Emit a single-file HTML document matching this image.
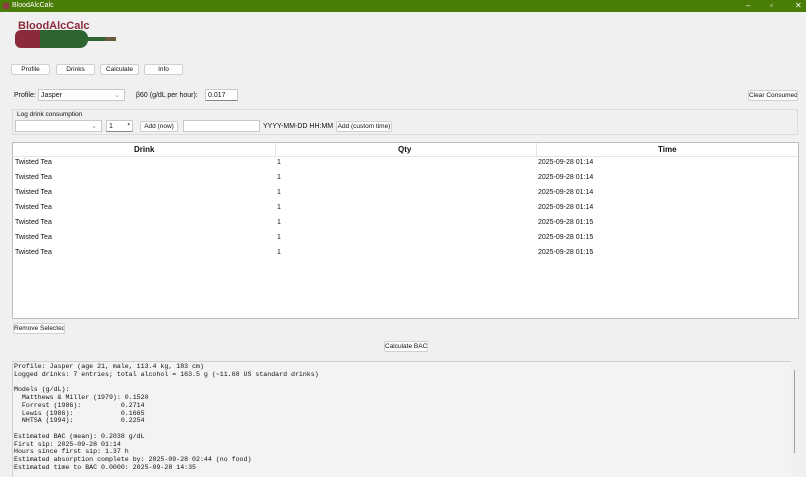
<!DOCTYPE html>
<html><head><style>
*{margin:0;padding:0;box-sizing:border-box}
body{width:806px;height:476px;overflow:hidden;background:#f0f0f0;font-family:"Liberation Sans",sans-serif;font-size:7px;color:#111;position:relative}
.a{position:absolute;white-space:nowrap}
.btn{position:absolute;background:#fdfdfd;border:1px solid #d0d0d0;border-radius:2px;text-align:center;font-size:6.5px;line-height:9px;white-space:nowrap;overflow:hidden}
.in{position:absolute;background:#fff;border:1px solid #c8c8c8;border-bottom:1px solid #888}
.mono{font-family:"Liberation Mono",monospace;font-size:6.6px;line-height:7.75px;white-space:pre}
</style></head><body>
<div class="a" style="left:0;top:0;width:806px;height:12px;background:#4a7d07"></div>
<div class="a" style="left:3px;top:3px;width:6px;height:6px;background:#8b3a46"></div>
<div class="a" style="left:12px;top:2px;color:#fff;font-size:7px">BloodAlcCalc</div>
<div class="a" style="left:746px;top:1px;color:#fff;font-size:8px">–</div>
<div class="a" style="left:770px;top:1px;color:#fff;font-size:8px">▫</div>
<div class="a" style="left:795px;top:1px;color:#fff;font-size:8px">✕</div>
<!-- logo -->
<div class="a" style="left:18px;top:20px;color:#8b2a3a;font-weight:bold;font-size:11px">BloodAlcCalc</div>
<div class="a" style="left:15px;top:30px;width:26px;height:18px;background:#8b2a3a;border-radius:6px 0 0 6px"></div>
<div class="a" style="left:40px;top:30px;width:48px;height:18px;background:#2e6430;border-radius:0 8px 8px 0"></div>
<div class="a" style="left:86px;top:37px;width:20px;height:4px;background:#2e6430"></div>
<div class="a" style="left:105px;top:37px;width:11px;height:4px;background:#6b5a3a"></div>
<div class="btn" style="left:11px;top:64px;width:39px;height:11px">Profile</div>
<div class="btn" style="left:56px;top:64px;width:39px;height:11px">Drinks</div>
<div class="btn" style="left:100px;top:64px;width:39px;height:11px">Calculate</div>
<div class="btn" style="left:144px;top:64px;width:39px;height:11px">Info</div>
<div class="a" style="left:14px;top:92px">Profile:</div>
<div class="in" style="left:38px;top:89px;width:87px;height:12px;border-bottom-color:#c8c8c8"><span class="a" style="left:2px;top:2px">Jasper</span><span class="a" style="right:4px;top:1px;color:#999">⌄</span></div>
<div class="a" style="left:136px;top:92px">β60 (g/dL per hour):</div>
<div class="in" style="left:205px;top:89px;width:33px;height:12px"><span class="a" style="left:2px;top:2px">0.017</span></div>
<div class="btn" style="left:748px;top:90px;width:50px;height:11px">Clear Consumed</div>
<div class="a" style="left:12px;top:109px;width:786px;height:26px;border:1px solid #dcdcdc"></div>
<div class="a" style="left:17px;top:111px;font-size:6.5px">Log drink consumption</div>
<div class="in" style="left:15px;top:120px;width:87px;height:12px;border-bottom-color:#c8c8c8"><span class="a" style="right:4px;top:1px;color:#999">⌄</span></div>
<div class="in" style="left:106px;top:120px;width:27px;height:12px"><span class="a" style="left:2px;top:2px">1</span><span class="a" style="right:2px;top:0;font-size:5px;color:#555">▴</span></div>
<div class="btn" style="left:140px;top:121px;width:38px;height:11px">Add (now)</div>
<div class="in" style="left:183px;top:120px;width:77px;height:12px;border-bottom-color:#c8c8c8"></div>
<div class="a" style="left:263px;top:123px">YYYY-MM-DD HH:MM</div>
<div class="btn" style="left:336px;top:121px;width:56px;height:11px">Add (custom time)</div>
<!-- table -->
<div class="a" style="left:12px;top:142px;width:787px;height:177px;background:#fff;border:1px solid #bdbdbd"></div>
<div class="a" style="left:13px;top:143px;width:785px;height:14px;border-bottom:1px solid #e5e5e5"></div>
<div class="a" style="left:275px;top:143px;width:1px;height:14px;background:#e5e5e5"></div>
<div class="a" style="left:536px;top:143px;width:1px;height:14px;background:#e5e5e5"></div>
<div class="a" style="left:134px;top:145px;font-weight:bold;font-size:8px">Drink</div>
<div class="a" style="left:398px;top:145px;font-weight:bold;font-size:8px">Qty</div>
<div class="a" style="left:658px;top:145px;font-weight:bold;font-size:8px">Time</div>
<div class="a" style="left:15px;top:155px;line-height:15px">Twisted Tea<br>Twisted Tea<br>Twisted Tea<br>Twisted Tea<br>Twisted Tea<br>Twisted Tea<br>Twisted Tea</div>
<div class="a" style="left:277px;top:155px;line-height:15px">1<br>1<br>1<br>1<br>1<br>1<br>1</div>
<div class="a" style="left:538px;top:155px;line-height:15px">2025-09-28 01:14<br>2025-09-28 01:14<br>2025-09-28 01:14<br>2025-09-28 01:14<br>2025-09-28 01:15<br>2025-09-28 01:15<br>2025-09-28 01:15</div>
<div class="btn" style="left:13px;top:323px;width:52px;height:11px">Remove Selected</div>
<div class="btn" style="left:384px;top:341px;width:44px;height:11px">Calculate BAC</div>
<div class="a" style="left:12px;top:361px;width:779px;height:116px;background:#f3f3f3;border-top:1px solid #cfcfcf;border-left:1px solid #cfcfcf"></div>
<div class="a" style="left:794px;top:370px;width:1px;height:83px;background:#a0a0a0"></div>
<div class="a mono" style="left:14px;top:363px">Profile: Jasper (age 21, male, 113.4 kg, 183 cm)
Logged drinks: 7 entries; total alcohol = 163.5 g (~11.68 US standard drinks)

Models (g/dL):
  Matthews &amp; Miller (1979): 0.1520
  Forrest (1986):          0.2714
  Lewis (1986):            0.1665
  NHTSA (1994):            0.2254

Estimated BAC (mean): 0.2038 g/dL
First sip: 2025-09-28 01:14
Hours since first sip: 1.37 h
Estimated absorption complete by: 2025-09-28 02:44 (no food)
Estimated time to BAC 0.0000: 2025-09-28 14:35</div>
</body></html>
